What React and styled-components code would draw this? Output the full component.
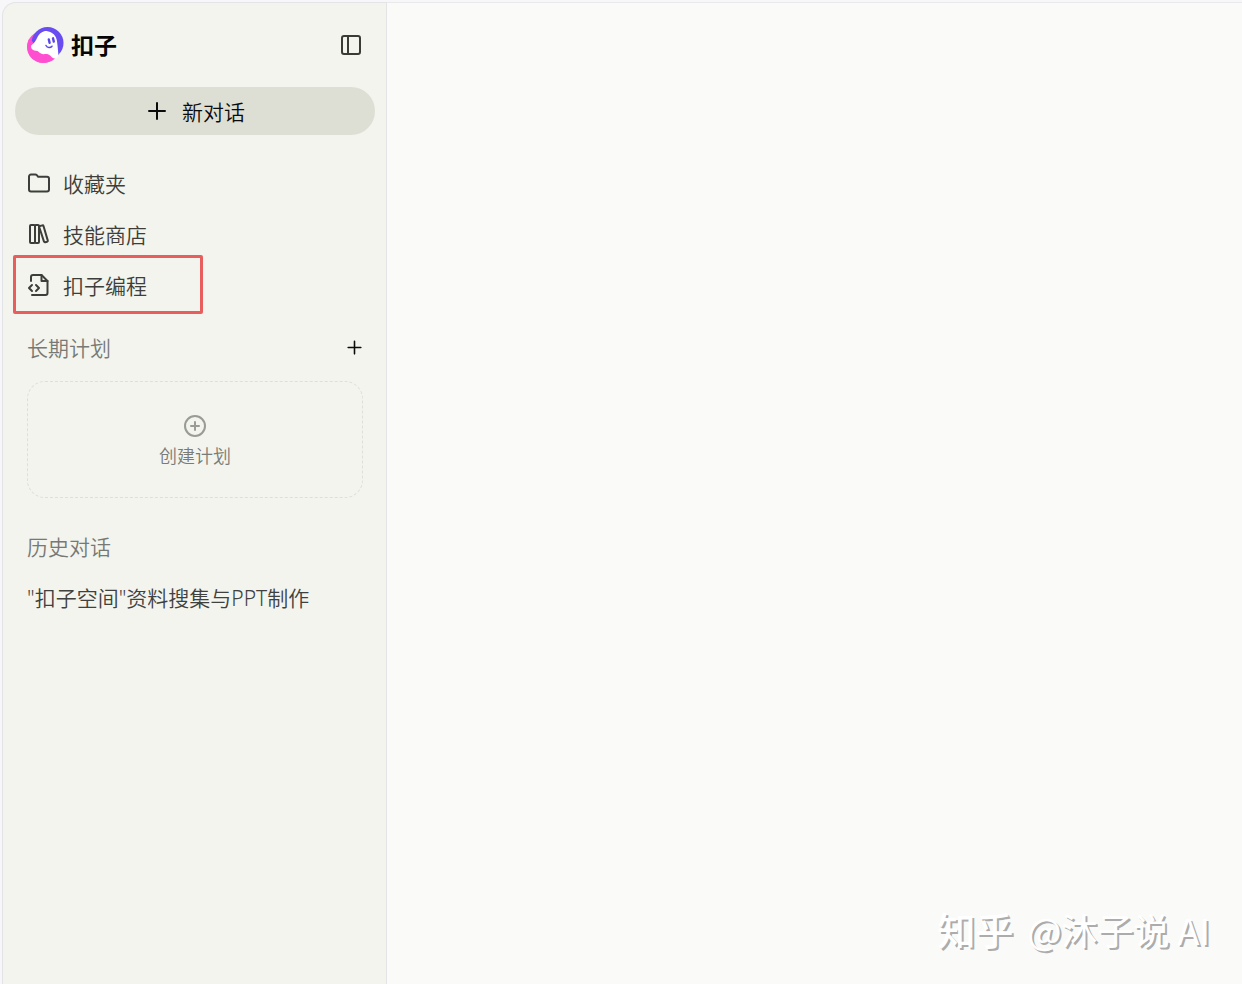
import React from "react";
import styled, { createGlobalStyle } from "styled-components";

const GlobalStyle = createGlobalStyle`
  *, *::before, *::after { box-sizing: border-box; }
  body {
    margin: 0;
    background: #f7f7f9;
    font-family: "Noto Sans", "Noto Sans CJK SC", sans-serif;
    font-weight: 350;
  }
  button { font: inherit; border: 0; padding: 0; background: none; cursor: pointer; }
  a { color: inherit; text-decoration: none; }
  svg { display: block; flex: none; }
`;

const Shell = styled.div`
  display: flex;
  min-height: 100vh;
  padding: 2px 0 0 2px;
`;

const Sidebar = styled.aside`
  flex: none;
  width: 385px;
  padding: 12px 11px 24px 12px;
  border: 1px solid #e3e4e6;
  border-bottom: 0;
  border-top-left-radius: 14px;
  background: #f2f4ed;
`;

const Main = styled.main`
  flex: 1;
  display: flex;
  justify-content: flex-end;
  align-items: flex-end;
  padding: 0 32px 28px;
  border-top: 1px solid #e9e9eb;
  background: #fafbf8;
`;

const Header = styled.header`
  display: flex;
  align-items: center;
  justify-content: space-between;
  height: 60px;
  padding: 0 12px;
`;

const Brand = styled.a`
  display: flex;
  align-items: center;
  gap: 7px;
  color: #050505;
  font-size: 23px;
  font-weight: 700;
  line-height: 36px;
`;

const IconButton = styled.button`
  display: flex;
  color: ${(p) => p.$color};
`;

const NewChat = styled.button`
  display: flex;
  align-items: center;
  justify-content: center;
  gap: 13px;
  width: 100%;
  height: 48px;
  margin: 12px 0 24px;
  border-radius: 24px;
  background: #dddfd5;
  color: #0b0b0b;
  font-size: 21px;
`;

const Nav = styled.nav`
  display: flex;
  flex-direction: column;
  gap: 3px;
`;

const NavItem = styled.a`
  position: relative;
  display: flex;
  align-items: center;
  gap: 12px;
  height: 48px;
  padding: 0 12px;
  color: #3d3e3b;
  font-size: 21px;
`;

const Highlight = styled.span`
  position: absolute;
  top: -6px;
  left: -2px;
  width: 190px;
  height: 59px;
  border: 3px solid #e85e5d;
  border-radius: 2px;
  pointer-events: none;
`;

const SectionHead = styled.div`
  display: flex;
  align-items: center;
  justify-content: space-between;
  height: 48px;
  margin-top: ${(p) => p.$top};
  padding: 0 11px 0 12px;
`;

const SectionTitle = styled.h2`
  margin: 0;
  color: #787975;
  font-size: 21px;
  font-weight: 350;
`;

const PlanCard = styled.button`
  display: flex;
  flex-direction: column;
  align-items: center;
  justify-content: center;
  gap: 6px;
  width: calc(100% - 24px);
  height: 117px;
  margin: 10px 12px 0;
  padding-top: 2px;
  border: 1px dashed #dddfd9;
  border-radius: 18px;
  color: #7a7b77;
  font-size: 18px;
  line-height: 24px;
`;

const PlanIcon = styled.span`
  color: #999b96;
`;

const HistoryItem = styled.a`
  display: flex;
  align-items: center;
  height: 48px;
  margin-top: 3px;
  padding: 0 12px;
  color: #40413f;
  font-size: 21px;
  white-space: nowrap;
`;

const Watermark = styled.div`
  display: flex;
  align-items: center;
  gap: 14px;
  color: #ffffff;
  font-family: "Noto Sans CJK SC", sans-serif;
  font-size: 36px;
  font-weight: 400;
  line-height: 54px;
  text-shadow: 2px 2px 0 #acacac;
  white-space: nowrap;
`;

const WatermarkSite = styled.span`
  font-size: 38px;
  font-weight: 500;
`;

function Icon({ size = 24, width = 2, children }) {
  return (
    <svg
      width={size}
      height={size}
      viewBox="0 0 24 24"
      fill="none"
      stroke="currentColor"
      strokeWidth={width}
      strokeLinecap="round"
      strokeLinejoin="round"
      aria-hidden="true"
    >
      {children}
    </svg>
  );
}

function Logo() {
  return (
    <svg width="37" height="36" viewBox="0 0 37 36" aria-hidden="true">
      <circle cx="16" cy="20" r="16" fill="#ff4fd0" />
      <circle cx="20.500" cy="16" r="16" fill="#694df0" />
      <path
        d="M2 12C-1.500 20 1 28 7 32.500C13 37 22 37 28 31.500L27 24L8 18L5 14Z"
        fill="#ff4fd0"
      />
      <path
        d="M4.700 18C7.500 16.500 8.700 13.500 10.300 10.500C12.500 6 16.500 3.600 20.500 4.200C26 5 29.300 9 30 14C30.600 18.500 31 23 31.300 27C31.300 29.500 30 32 27.600 31.600C24.500 31 23.800 28 21 27.200C18.500 26.500 16.500 27.800 14 26.600C11.800 25.500 11.500 24 9 23.800C6.500 23.600 4.700 22.500 4.300 20.800C4 19.500 4 18.500 4.700 18Z"
        fill="#fff"
      />
      <g stroke="#5947e8" fill="none" strokeLinecap="round">
        <path d="M21.800 12.500l.8 3.300M26 11.300l.8 3.300" strokeWidth="2.400" />
        <path d="M19 18.500c1.400 2.500 4.400 2.700 6 .7" strokeWidth="1.500" />
      </g>
    </svg>
  );
}

const PanelIcon = () => (
  <Icon>
    <rect x="3" y="3" width="18" height="18" rx="2" />
    <path d="M9 3v18" />
  </Icon>
);

const PlusIcon = ({ size, width }) => (
  <Icon size={size} width={width}>
    <path d="M4 12h16M12 4v16" />
  </Icon>
);

const FolderIcon = () => (
  <Icon>
    <path d="M2 5.500a2 2 0 0 1 2-2h4.300a2 2 0 0 1 1.500.7l1.400 1.600h8.800a2 2 0 0 1 2 2v10.700a2 2 0 0 1-2 2H4a2 2 0 0 1-2-2Z" />
  </Icon>
);

const BooksIcon = () => (
  <Icon>
    <rect x="3" y="3" width="5" height="18" rx="1" />
    <rect x="8" y="3" width="4" height="18" rx="1" />
    <path d="M12.300 4.200l3-.8a1 1 0 0 1 1.200.7l4.300 14.500a1 1 0 0 1-.7 1.200l-1.900.5a1 1 0 0 1-1.200-.7L12.300 5.200Z" />
  </Icon>
);

const CodeFileIcon = () => (
  <Icon>
    <path d="M4 8V4a2 2 0 0 1 2-2h8.500l6 6v12a2 2 0 0 1-2 2H5" />
    <path d="M14.500 2v6h6" />
    <path d="M5 12l-3 3 3 3M9 12l3 3-3 3" />
  </Icon>
);

const CirclePlusIcon = () => (
  <Icon>
    <circle cx="12" cy="12" r="10" />
    <path d="M8 12h8M12 8v8" />
  </Icon>
);

const navItems = [
  { label: "收藏夹", icon: FolderIcon },
  { label: "技能商店", icon: BooksIcon },
  { label: "扣子编程", icon: CodeFileIcon, highlighted: true },
];

export default function App() {
  return (
    <>
      <GlobalStyle />
      <Shell>
        <Sidebar>
          <Header>
            <Brand href="#">
              <Logo />
              扣子
            </Brand>
            <IconButton $color="#393b37" aria-label="收起侧边栏">
              <PanelIcon />
            </IconButton>
          </Header>
          <NewChat>
            <PlusIcon size={24} width={2} />
            新对话
          </NewChat>
          <Nav>
            {navItems.map(({ label, icon: ItemIcon, highlighted }) => (
              <NavItem href="#" key={label}>
                <ItemIcon />
                {label}
                {highlighted && <Highlight />}
              </NavItem>
            ))}
          </Nav>
          <SectionHead $top="14px">
            <SectionTitle>长期计划</SectionTitle>
            <IconButton $color="#0b0b0b" aria-label="新建长期计划">
              <PlusIcon size={19} width={2} />
            </IconButton>
          </SectionHead>
          <PlanCard>
            <PlanIcon>
              <CirclePlusIcon />
            </PlanIcon>
            创建计划
          </PlanCard>
          <SectionHead $top="24px">
            <SectionTitle>历史对话</SectionTitle>
          </SectionHead>
          <HistoryItem href="#">"扣子空间"资料搜集与PPT制作</HistoryItem>
        </Sidebar>
        <Main>
          <Watermark>
            <WatermarkSite>知乎</WatermarkSite>
            <span>@沐子说 AI</span>
          </Watermark>
        </Main>
      </Shell>
    </>
  );
}
